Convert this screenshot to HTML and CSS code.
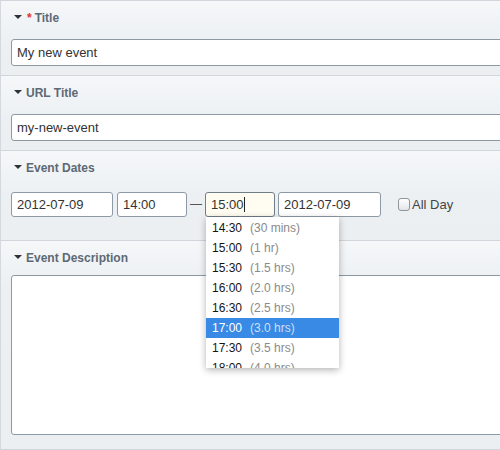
FILE: index.html
```html
<!DOCTYPE html>
<html>
<head>
<meta charset="utf-8">
<link rel="stylesheet" href="styles.css">
</head>
<body>
<div class="form">
  <section class="field field-title">
    <h3 class="field-head"><span class="caret"></span><span class="req">*</span>Title</h3>
    <div class="field-body"><div class="text-input">My new event</div></div>
  </section>
  <section class="field field-url">
    <h3 class="field-head"><span class="caret"></span>URL Title</h3>
    <div class="field-body"><div class="text-input">my-new-event</div></div>
  </section>
  <section class="field field-dates">
    <h3 class="field-head"><span class="caret"></span>Event Dates</h3>
    <div class="field-body date-row">
      <div class="small-input date">2012-07-09</div>
      <div class="small-input time">14:00</div>
      <span class="dash">—</span>
      <div class="time-wrap">
        <div class="small-input time focused">15:00<span class="cursor"></span></div>
        <ul class="time-menu">
          <li><span class="t">14:30</span><span class="d">(30 mins)</span></li>
          <li><span class="t">15:00</span><span class="d">(1 hr)</span></li>
          <li><span class="t">15:30</span><span class="d">(1.5 hrs)</span></li>
          <li><span class="t">16:00</span><span class="d">(2.0 hrs)</span></li>
          <li><span class="t">16:30</span><span class="d">(2.5 hrs)</span></li>
          <li class="selected"><span class="t">17:00</span><span class="d">(3.0 hrs)</span></li>
          <li><span class="t">17:30</span><span class="d">(3.5 hrs)</span></li>
          <li><span class="t">18:00</span><span class="d">(4.0 hrs)</span></li>
        </ul>
      </div>
      <div class="small-input date end-date">2012-07-09</div>
      <label class="allday"><span class="checkbox"></span>All Day</label>
    </div>
  </section>
  <section class="field field-desc">
    <h3 class="field-head"><span class="caret"></span>Event Description</h3>
    <div class="field-body"><div class="textarea"></div></div>
  </section>
</div>
</body>
</html>
```
FILE: styles.css
```css
html, body {
  margin: 0;
  padding: 0;
  overflow: hidden;
  background: #ebeff2;
}
body {
  font-family: "Liberation Sans", Arial, sans-serif;
  color: #333;
}
.form {
  border-left: 1px solid #d3d9df;
  width: 560px;
}
.field {
  border-top: 1px solid #d0d6dc;
  background: linear-gradient(to bottom, #f5f7f9 0, #ecf0f3 45px, #ebeff2 100%);
  padding: 10px 0 9px 10px;
}
.field-desc {
  border-bottom: 1px solid #d0d6dc;
  padding-bottom: 14px;
}
.field-dates {
  padding-bottom: 23px;
}
.field-head {
  margin: 0;
  display: flex;
  align-items: center;
  padding-left: 3px;
  font-size: 12px;
  line-height: 14px;
  font-weight: bold;
  color: #5d6974;
}
.caret {
  width: 0;
  height: 0;
  border-left: 4px solid transparent;
  border-right: 4px solid transparent;
  border-top: 4px solid #2f3338;
  margin-right: 4px;
  margin-top: -3px;
}
.req {
  color: #e3332e;
  margin-right: 3px;
  margin-left: 1px;
}
.field-body {
  margin-top: 14px;
}
.field-dates .field-body {
  margin-top: 17px;
}
.field-desc .field-body {
  margin-top: 10px;
}
.text-input {
  box-sizing: border-box;
  width: 540px;
  height: 27px;
  border: 1px solid #8d9aa5;
  border-radius: 3px;
  background: #fff;
  font-size: 13px;
  line-height: 25px;
  padding-left: 5px;
  color: #333;
}
.date-row {
  display: flex;
  align-items: center;
}
.small-input {
  box-sizing: border-box;
  height: 25px;
  border: 1px solid #8d9aa5;
  border-radius: 3px;
  background: #fff;
  font-size: 13px;
  line-height: 23px;
  padding-left: 5px;
  color: #333;
}
.date { width: 102px; margin-right: 4px; }
.time { width: 70px; }
.end-date { width: 103px; margin-left: 3px; margin-right: 0; }
.focused {
  background: #fffdf2;
  border-color: #6f7d89;
  position: relative;
}
.cursor {
  display: inline-block;
  width: 1px;
  height: 15px;
  background: #222;
  vertical-align: -3px;
  margin-left: 0;
}
.dash {
  font-size: 12px;
  color: #555;
  padding: 0 3px;
  line-height: 25px;
}
.time-wrap {
  position: relative;
}
.time-menu {
  position: absolute;
  left: 1px;
  top: 25px;
  width: 133px;
  height: 150px;
  margin: 0;
  padding: 1px 0 0;
  list-style: none;
  background: #fff;
  overflow: hidden;
  box-shadow: 0 2px 7px rgba(0, 0, 0, 0.3);
  z-index: 5;
}
.time-menu li {
  height: 20px;
  line-height: 20px;
  font-size: 12px;
  padding-left: 6px;
  color: #151515;
  white-space: nowrap;
}
.time-menu .t {
  margin-right: 8px;
}
.time-menu .d {
  color: #8a8a8a;
}
.time-menu li.selected {
  background: #388ae5;
  color: #fff;
}
.time-menu li.selected .d {
  color: #cfdff5;
}
.allday {
  display: flex;
  align-items: center;
  margin-left: 17px;
  font-size: 13px;
  color: #444;
}
.checkbox {
  box-sizing: border-box;
  width: 12px;
  height: 13px;
  border: 1px solid #8f959b;
  border-radius: 3px;
  background: linear-gradient(to bottom, #ffffff, #e3e5e8);
  margin-right: 2px;
}
.textarea {
  box-sizing: border-box;
  width: 540px;
  height: 160px;
  border: 1px solid #8d9aa5;
  border-radius: 3px;
  background: #fff;
}
```
